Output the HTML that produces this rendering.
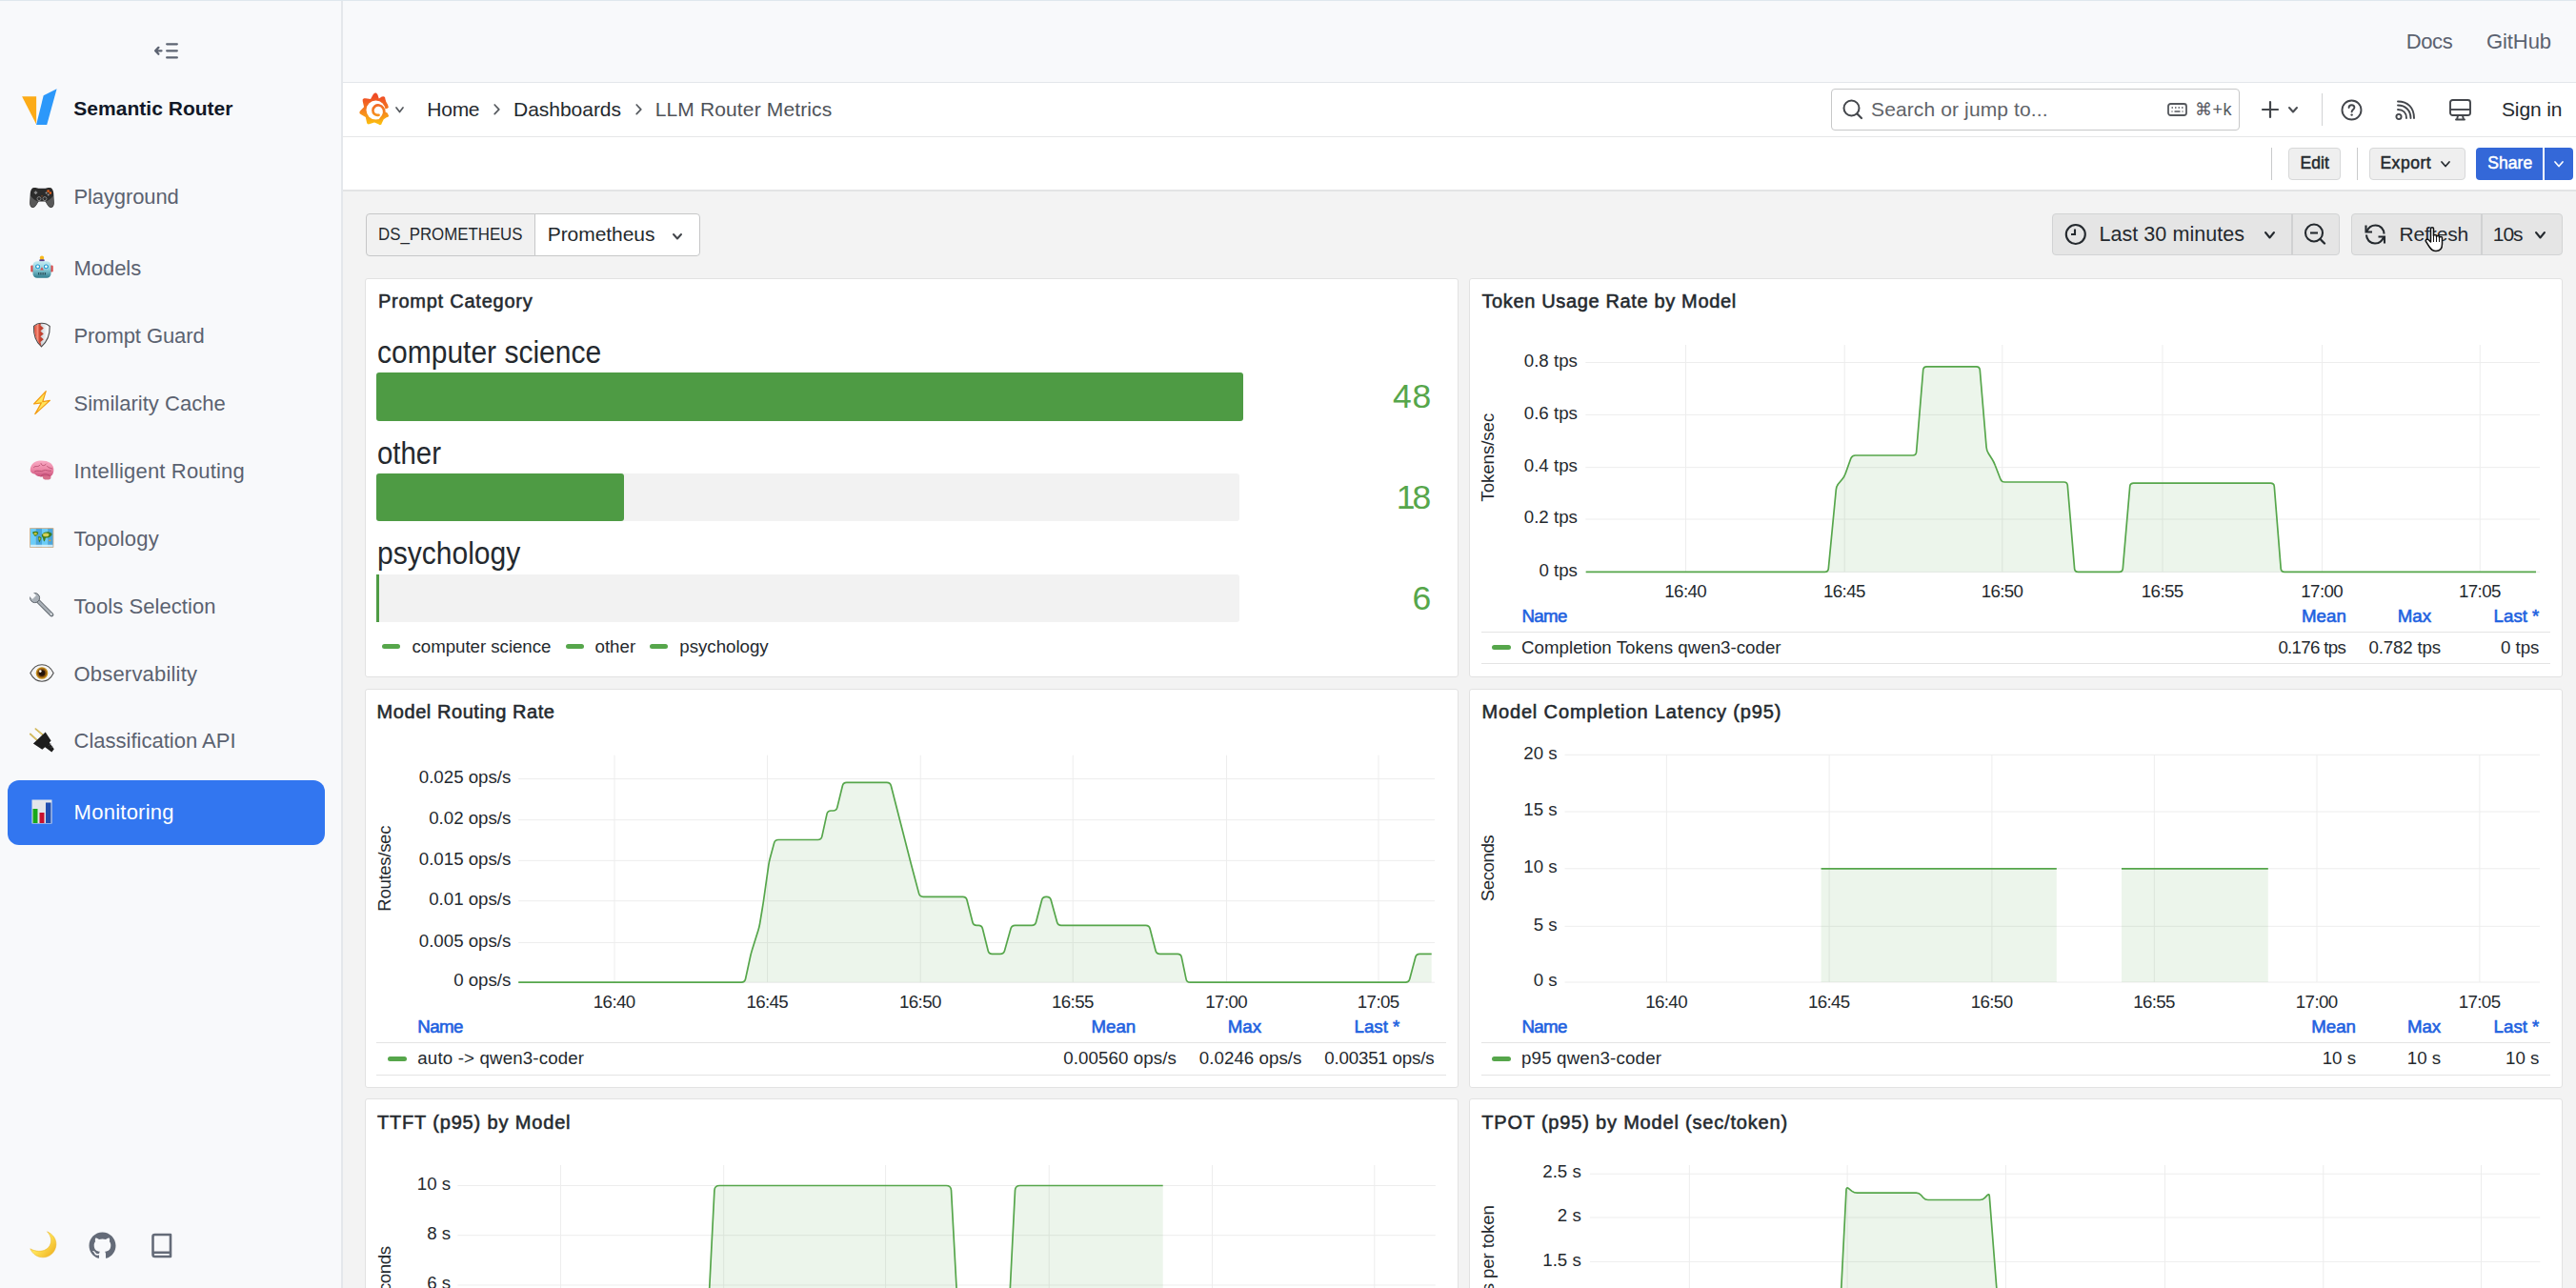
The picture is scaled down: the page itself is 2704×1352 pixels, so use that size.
<!DOCTYPE html><html><head><meta charset="utf-8"><style>
html,body{margin:0;padding:0;width:2704px;height:1352px;overflow:hidden;background:#f3f3f3;font-family:"Liberation Sans",sans-serif;}
.t{position:absolute;white-space:nowrap;line-height:0;}
</style></head><body>
<div style="position:absolute;left:0px;top:0px;width:358px;height:1352px;background:#f8f9fb"></div>
<div style="position:absolute;left:358px;top:0px;width:2px;height:1352px;background:#e4e7eb"></div>
<div style="position:absolute;left:360px;top:0px;width:2344px;height:86px;background:#f8f9fb"></div>
<div style="position:absolute;left:360px;top:86px;width:2344px;height:1px;background:#e3e6ea"></div>
<div style="position:absolute;left:0px;top:0px;width:2704px;height:1.4px;background:#dfe7ee"></div>
<svg style="position:absolute;left:160px;top:42px;overflow:visible;" width="30" height="22" viewBox="0 0 30 22"><g stroke="#5d6472" stroke-width="2.3" fill="none" stroke-linecap="round" stroke-linejoin="round"><path d="M15.2 4.3 H25.8"/><path d="M15.2 11.3 H25.8"/><path d="M15.2 18.4 H25.8"/><path d="M6.4 7.9 L3.1 11.3 L6.4 14.7 M3.3 11.3 H9.5"/></g></svg>
<svg style="position:absolute;left:22px;top:93px;overflow:visible;" width="38" height="39" viewBox="0 0 38 39"><path d="M1.1 8.2 H16.1 V37.6 Z" fill="#fcab17"/><path d="M23.7 7.2 L37.6 0.3 L27.2 37.9 H16.1 Z" fill="#2c98fa"/></svg>
<div class="t" style="left:77.30px;top:113.85px;font-size:21px;color:#111827;font-weight:700;letter-spacing:0.022px;">Semantic Router</div>
<div class="t" style="left:77.50px;top:206.50px;font-size:22px;color:#5b6270;font-weight:400;letter-spacing:-0.111px;">Playground</div>
<div class="t" style="left:77.50px;top:282.20px;font-size:22px;color:#5b6270;font-weight:400;letter-spacing:-0.054px;">Models</div>
<div class="t" style="left:77.50px;top:353.10px;font-size:22px;color:#5b6270;font-weight:400;letter-spacing:-0.089px;">Prompt Guard</div>
<div class="t" style="left:77.50px;top:424.10px;font-size:22px;color:#5b6270;font-weight:400;letter-spacing:0.016px;">Similarity Cache</div>
<div class="t" style="left:77.50px;top:494.80px;font-size:22px;color:#5b6270;font-weight:400;letter-spacing:0.172px;">Intelligent Routing</div>
<div class="t" style="left:77.50px;top:565.50px;font-size:22px;color:#5b6270;font-weight:400;letter-spacing:0.153px;">Topology</div>
<div class="t" style="left:77.50px;top:636.50px;font-size:22px;color:#5b6270;font-weight:400;letter-spacing:0.074px;">Tools Selection</div>
<div class="t" style="left:77.50px;top:707.60px;font-size:22px;color:#5b6270;font-weight:400;letter-spacing:0.196px;">Observability</div>
<div class="t" style="left:77.50px;top:778.30px;font-size:22px;color:#5b6270;font-weight:400;letter-spacing:0.007px;">Classification API</div>
<div style="position:absolute;left:8px;top:819px;width:333px;height:68px;background:#3276f0;border-radius:12px"></div>
<div class="t" style="left:77.60px;top:853.30px;font-size:22px;color:#ffffff;font-weight:400;letter-spacing:0.248px;">Monitoring</div>
<svg style="position:absolute;left:31px;top:196px;overflow:visible;" width="26" height="23" viewBox="0 0 26 23"><path d="M5 1 C2.5 1 1.2 3 0.8 6.5 L0.2 16.5 C0 19.8 1.5 22 3.5 22 C5.3 22 6.3 20.8 7.5 18.8 L9.5 15.5 H16.5 L18.5 18.8 C19.7 20.8 20.7 22 22.5 22 C24.5 22 26 19.8 25.8 16.5 L25.2 6.5 C24.8 3 23.5 1 21 1 C19 1 18 1.6 16.5 1.8 H9.5 C8 1.6 7 1 5 1 Z" fill="#2b2b2b"/><path d="M1.2 9.5 L0.6 16.5 C0.4 19.4 1.8 21.4 3.5 21.4 C5 21.4 6 20.3 7.2 18.5 L9.2 15.6 C6.5 15 3.5 12.8 1.2 9.5 Z" fill="#585858"/><path d="M24.8 9.5 L25.4 16.5 C25.6 19.4 24.2 21.4 22.5 21.4 C21 21.4 20 20.3 18.8 18.5 L16.8 15.6 C19.5 15 22.5 12.8 24.8 9.5 Z" fill="#585858"/><path d="M6.5 4.6 V8 M4.8 6.3 H8.2" stroke="#8a8a8a" stroke-width="1.4"/><circle cx="19.6" cy="4.6" r="1.3" fill="#e4621e"/><circle cx="21.8" cy="6.6" r="1.3" fill="#e4621e"/><circle cx="17.6" cy="6.5" r="1" fill="#9a9a9a"/><circle cx="19.7" cy="8.6" r="1" fill="#9a9a9a"/><circle cx="10" cy="12.6" r="2" fill="#2b2b2b" stroke="#8c8c8c" stroke-width="0.9"/><circle cx="16" cy="12.6" r="2" fill="#2b2b2b" stroke="#8c8c8c" stroke-width="0.9"/><circle cx="13" cy="9.8" r="0.6" fill="#c0601f"/></svg>
<svg style="position:absolute;left:32px;top:268px;overflow:visible;" width="24" height="24" viewBox="0 0 24 24"><defs><linearGradient id="rb" x1="0" y1="0" x2="0" y2="1"><stop offset="0" stop-color="#c5ecf2"/><stop offset="0.45" stop-color="#8fd0dc"/><stop offset="1" stop-color="#2f7d8e"/></linearGradient></defs><circle cx="12" cy="2.8" r="2.2" fill="#f6b81c"/><rect x="9.3" y="4.2" width="5.4" height="2.3" rx="0.8" fill="#5b3f8f"/><rect x="0.3" y="10.5" width="3.2" height="7" rx="1.2" fill="#d94b4b"/><rect x="20.5" y="10.5" width="3.2" height="7" rx="1.2" fill="#d94b4b"/><rect x="2.5" y="6.2" width="19" height="17.5" rx="4.5" fill="url(#rb)"/><circle cx="7.6" cy="11.8" r="2.8" fill="#ffffff"/><circle cx="7.6" cy="11.8" r="2.0" fill="#ffffff" stroke="#2a9fd0" stroke-width="1.3"/><circle cx="16.4" cy="11.8" r="2.8" fill="#ffffff"/><circle cx="16.4" cy="11.8" r="2.0" fill="#ffffff" stroke="#2a9fd0" stroke-width="1.3"/><path d="M12 12.3 L10.2 15.6 H13.8 Z" fill="#d94b4b"/><rect x="8" y="18" width="8" height="2.4" rx="0.5" fill="#1e4f5c"/><path d="M9.8 18 V20.4 M12 18 V20.4 M14.2 18 V20.4" stroke="#9ed7e0" stroke-width="0.7"/></svg>
<svg style="position:absolute;left:34px;top:338px;overflow:visible;" width="20" height="27" viewBox="0 0 20 27"><defs><linearGradient id="shr" x1="0" y1="0" x2="1" y2="0"><stop offset="0.15" stop-color="#e4604c"/><stop offset="0.35" stop-color="#f7907c"/><stop offset="0.55" stop-color="#d04c38"/><stop offset="0.7" stop-color="#c0402f"/></linearGradient><linearGradient id="shw" x1="0" y1="0" x2="1" y2="0"><stop offset="0.4" stop-color="#c9ccd0"/><stop offset="0.8" stop-color="#f6f7f8"/></linearGradient></defs><path d="M1.5 4.5 C4 2 7 1.2 9.8 1.2 C12.6 1.2 15.6 2 18.2 4.5 C18.5 13 15.5 20.5 9.5 25.9 C3.5 20.5 1 13 1.5 4.5 Z" fill="url(#shw)" stroke="#4a4a4a" stroke-width="1.1"/><path d="M2.1 4.8 C4.4 2.6 7 1.8 9 1.8 L8.4 3.5 L11.8 6.6 L8.4 9.5 L11.8 12.4 L8.4 15.3 L11.8 18.3 L8.4 21 L9.5 25 C4 20 1.6 13 2.1 4.8 Z" fill="url(#shr)"/></svg>
<svg style="position:absolute;left:35px;top:410px;overflow:visible;" width="18" height="25" viewBox="0 0 18 25"><path d="M13.2 0.6 L0.6 14 L8.4 12.9 L1.8 24.6 L17.4 10.4 L9.8 11.6 Z" fill="#ffe55c" stroke="#f39c12" stroke-width="1.2" stroke-linejoin="round"/></svg>
<svg style="position:absolute;left:31px;top:483px;overflow:visible;" width="26" height="21" viewBox="0 0 26 21"><defs><linearGradient id="brg" x1="0" y1="0" x2="0" y2="1"><stop offset="0" stop-color="#f8aac4"/><stop offset="0.55" stop-color="#ec86a6"/><stop offset="1" stop-color="#c9507a"/></linearGradient></defs><ellipse cx="18.2" cy="18" rx="4.3" ry="2.6" fill="#d76f8b"/><path d="M0.8 11 C0.5 6 4 1.8 9 0.8 C13 0 18.5 0.5 22 3 C24.5 5 25.8 8 25.3 11.5 C25 14.5 23.5 16.5 21.5 17.2 C19 16.3 16 16.2 13.5 17.4 C12.5 17.8 11.8 17.6 11.2 17.2 C8.8 17.2 6.8 16.3 5.3 14.6 C3.3 14.3 1.2 13.3 0.8 11 Z" fill="url(#brg)"/><path d="M4.5 7.5 C6.5 5 8.8 8.2 10.8 5.2 M12 3.5 C13.2 6.8 15.8 6 17.5 4 M18.5 6.3 C20 8.8 22 7.8 23.8 9 M5.5 11.8 C8.8 10 12 12.8 15 10.8 C17 9.6 19.5 11.8 22.5 11.2 M12 16.6 C14 14.3 17.5 14 21 16.2" stroke="#a83c60" stroke-width="0.9" stroke-opacity="0.75" fill="none" stroke-linecap="round"/></svg>
<svg style="position:absolute;left:31px;top:554px;overflow:visible;" width="26" height="21" viewBox="0 0 26 21"><rect x="0" y="0" width="25.4" height="21" rx="0.8" fill="#d8b48c"/><rect x="0.9" y="0.9" width="5.9" height="19.2" fill="#6ccdf8"/><rect x="6.8" y="0.9" width="6.2" height="19.2" fill="#4aa6dd"/><rect x="13" y="0.9" width="6.2" height="19.2" fill="#6ccdf8"/><rect x="19.2" y="0.9" width="5.3" height="19.2" fill="#4aa6dd"/><path d="M0.9 17.8 H24.5 V20.1 H0.9 Z" fill="#dff3fb" fill-opacity="0.85"/><path d="M3 4.8 C4.5 3.6 7 3.4 9 4.4 C9.6 5.6 8.8 7 7.5 7.8 C6.8 8.6 6.3 9.2 5.6 8.7 C4.8 7.8 3.6 6.5 3 4.8 Z" fill="#3f7d22"/><ellipse cx="6.2" cy="6.3" rx="1.6" ry="1.2" fill="#c8c23a"/><path d="M9.2 9.3 C10.6 9 12 9.6 12.4 10.8 C12.2 12.6 11 14.2 10.3 15.6 C9.6 14 9.2 11.8 9.2 9.3 Z" fill="#3f7d22"/><ellipse cx="10.6" cy="11.5" rx="0.9" ry="1.3" fill="#b8b83a"/><path d="M12.8 7.6 C14 5.2 17 4 20.5 4.4 C22.5 4.8 23.8 5.8 23.5 7.2 C22.8 8.6 21.5 9.6 20 10.2 C18.5 10.4 17.2 10.6 16.6 11.2 C16.8 12.4 16 13.8 15.3 14.6 C14.6 13.6 14.3 12 14 10.8 C13.3 10 12.8 8.8 12.8 7.6 Z" fill="#3f7d22"/><ellipse cx="17.2" cy="7.4" rx="3.2" ry="1.8" fill="#d4d058"/><ellipse cx="21.4" cy="13.3" rx="1.1" ry="0.9" fill="#d9a436"/></svg>
<svg style="position:absolute;left:31px;top:622px;overflow:visible;" width="26" height="26" viewBox="0 0 26 26"><path d="M6.5 6.5 L23.2 23.2" stroke="#5f666d" stroke-width="4.4" stroke-linecap="round"/><path d="M6.5 6.5 L23.2 23.2" stroke="#a9b0b7" stroke-width="2.6" stroke-linecap="round"/><circle cx="5.6" cy="5.6" r="5" fill="#a9b0b7" stroke="#5f666d" stroke-width="1"/><path d="M-0.5 3.5 L3.5 -0.5 L7 3 L3 7 Z" fill="#f8f9fb"/><circle cx="22.6" cy="22.6" r="0.9" fill="#f8f9fb"/></svg>
<svg style="position:absolute;left:31px;top:697px;overflow:visible;" width="26" height="19" viewBox="0 0 26 19"><path d="M0.8 9.5 C4 3 8.5 0.8 13 0.8 C17.5 0.8 22 3 25.2 9.5 C22 16 17.5 18.2 13 18.2 C8.5 18.2 4 16 0.8 9.5 Z" fill="#f4f4f4" stroke="#4d4d4d" stroke-width="1.1"/><circle cx="13" cy="9.5" r="6.3" fill="#c7901c"/><circle cx="13" cy="9.5" r="5" fill="#8a5412"/><circle cx="13" cy="9.5" r="3.3" fill="#24140a"/><circle cx="11.3" cy="7.6" r="1.3" fill="#ffffff"/></svg>
<svg style="position:absolute;left:31px;top:764px;overflow:visible;" width="27" height="27" viewBox="0 0 27 27"><path d="M6.4 1.1 L13.6 7.2 M0.8 6.5 L7.8 12.9" stroke="#c9ad45" stroke-width="1.7" stroke-linecap="round"/><path d="M6.6 1.3 L13 6.8 M1 6.7 L7.3 12.5" stroke="#efe1a0" stroke-width="0.5" stroke-linecap="round"/><path d="M3.9 16.5 L16.7 4.4 L22.6 13.4 L20.8 15.5 L25.8 22.3 L23.3 25.6 L16.2 20.3 L13.3 22.7 Z" fill="#1d1d1d"/><path d="M20.5 18.5 L22.5 16.8 M22.3 21 L24.3 19.3" stroke="#555" stroke-width="0.9"/></svg>
<svg style="position:absolute;left:33px;top:839px;overflow:visible;" width="22" height="26" viewBox="0 0 22 26"><rect x="0.5" y="0.5" width="21" height="25" fill="#e3e6ea"/><rect x="1.5" y="10" width="5" height="15" fill="#19a81b"/><rect x="8.5" y="14" width="5" height="11" fill="#c8102e"/><rect x="15" y="3.5" width="5.5" height="21.5" fill="#1f4fb0"/></svg>
<svg style="position:absolute;left:31px;top:1291px;overflow:visible;" width="30" height="30" viewBox="0 0 30 30"><defs><linearGradient id="mn" x1="0.2" y1="0.3" x2="0.9" y2="0.9"><stop offset="0.3" stop-color="#ffe55a"/><stop offset="1" stop-color="#f0b424"/></linearGradient></defs><path d="M18.5 1.8 C24.5 4.5 28.2 9.5 27.9 15.5 C27.5 23 21.5 28.8 14.2 28.8 C8.5 28.8 3.2 25.5 0.8 19.8 C5 22.3 10.5 23 15.2 21.5 C20.5 19.5 23.2 14.5 22.5 9.5 C22 6.5 20.5 3.8 18.5 1.8 Z" fill="url(#mn)" stroke="#e8b020" stroke-width="0.5"/></svg>
<svg style="position:absolute;left:93px;top:1293px;overflow:visible;" width="29" height="29" viewBox="0 0 29 29"><path fill="#646b78" d="M14.5 0.5 C6.8 0.5 0.5 6.8 0.5 14.5 C0.5 20.7 4.5 25.9 10.1 27.8 C10.8 27.9 11 27.5 11 27.2 V24.6 C7.1 25.4 6.3 23 6.3 23 C5.7 21.4 4.8 20.9 4.8 20.9 C3.5 20.1 4.9 20.1 4.9 20.1 C6.3 20.2 7 21.5 7 21.5 C8.3 23.6 10.3 23 11.1 22.7 C11.2 21.8 11.6 21.2 12 20.8 C8.9 20.5 5.7 19.3 5.7 14 C5.7 12.5 6.2 11.2 7.1 10.2 C7 9.9 6.5 8.5 7.3 6.6 C7.3 6.6 8.4 6.2 11 8 C12.1 7.7 13.3 7.5 14.5 7.5 C15.7 7.5 16.9 7.7 18 8 C20.6 6.2 21.7 6.6 21.7 6.6 C22.5 8.5 22 9.9 21.9 10.2 C22.8 11.2 23.3 12.5 23.3 14 C23.3 19.3 20.1 20.5 17 20.8 C17.5 21.3 18 22.2 18 23.4 V27.2 C18 27.5 18.2 27.9 18.9 27.8 C24.5 25.9 28.5 20.7 28.5 14.5 C28.5 6.8 22.2 0.5 14.5 0.5 Z"/></svg>
<svg style="position:absolute;left:158px;top:1294px;overflow:visible;" width="24" height="28" viewBox="0 0 24 28"><path d="M2.5 22 V4 C2.5 2.8 3.3 2 4.5 2 H21 V25 H4.5 C3.3 25 2.5 24 2.5 22.8 C2.5 21.6 3.3 20.8 4.5 20.8 H21" fill="none" stroke="#646b78" stroke-width="2.6" stroke-linejoin="round"/></svg>
<div class="t" style="left:2525.70px;top:44.30px;font-size:22px;color:#5b6270;font-weight:400;letter-spacing:-0.356px;">Docs</div>
<div class="t" style="left:2610.00px;top:44.30px;font-size:22px;color:#5b6270;font-weight:400;letter-spacing:-0.081px;">GitHub</div>
<div style="position:absolute;left:360px;top:87px;width:2344px;height:56px;background:#ffffff"></div>
<div style="position:absolute;left:360px;top:143px;width:2344px;height:1px;background:#e6e7e8"></div>
<div style="position:absolute;left:360px;top:144px;width:2344px;height:55px;background:#ffffff"></div>
<div style="position:absolute;left:360px;top:199px;width:2344px;height:1.5px;background:#e3e4e5"></div>
<svg style="position:absolute;left:370px;top:92px;overflow:visible;" width="60" height="48" viewBox="0 0 60 48"><defs><linearGradient id="gg" x1="0" y1="0" x2="0" y2="1"><stop offset="0.1" stop-color="#ef4b25"/><stop offset="0.5" stop-color="#f47a20"/><stop offset="1" stop-color="#fcc30e"/></linearGradient><linearGradient id="gg2" gradientUnits="userSpaceOnUse" x1="0" y1="14" x2="0" y2="34"><stop offset="0" stop-color="#f05a28"/><stop offset="1" stop-color="#f7a21a"/></linearGradient></defs><path fill="url(#gg)" d="M10.78 14.54 L10.66 12.56 L11.94 11.20 L13.92 11.18 L19.01 12.12 L21.64 7.21 L23.02 5.64 L24.94 5.61 L26.37 7.13 L27.77 11.47 L30.73 9.57 L32.54 9.13 L34.05 10.07 L34.46 11.90 L35.25 14.81 L37.08 18.04 L37.84 20.87 L36.71 21.81 L34.18 22.44 L34.18 25.56 L36.53 26.60 L37.33 27.89 L38.06 29.45 L37.42 30.86 L35.76 31.33 L32.76 33.33 L30.93 37.01 L30.22 38.65 L28.66 39.19 L27.09 38.33 L22.98 36.53 L18.40 37.90 L16.65 38.39 L15.19 37.51 L14.80 35.73 L13.79 30.95 L9.11 28.36 L7.61 27.24 L7.36 25.48 L8.50 24.00 L12.09 20.15 Z"/><circle cx="24.5" cy="23.6" r="10" fill="#ffffff"/><path d="M27.6 28.7 C24 29.6 21.3 27.2 21.4 23.8 C21.6 20.2 24.6 18 28 18.5 C31.7 19.2 33.8 23 33.1 26.8 C32.6 29.5 31 31.5 29.5 32.8" fill="none" stroke="url(#gg2)" stroke-width="2.6" stroke-linecap="round"/></svg>
<svg style="position:absolute;left:415px;top:112px;overflow:visible;" width="9" height="6" viewBox="0 0 9 6"><path d="M1 1 L4.5 5.5 L8 1" fill="none" stroke="#55595e" stroke-width="1.7" stroke-linecap="round" stroke-linejoin="round"/></svg>
<div class="t" style="left:448.30px;top:114.85px;font-size:21px;color:#24292e;font-weight:400;letter-spacing:-0.258px;">Home</div>
<svg style="position:absolute;left:518px;top:109px;overflow:visible;" width="7" height="12" viewBox="0 0 7 12"><path d="M1.2 1 L5.8 5.8 L1.2 10.6" fill="none" stroke="#55595e" stroke-width="1.7" stroke-linecap="round" stroke-linejoin="round"/></svg>
<div class="t" style="left:539.00px;top:114.85px;font-size:21px;color:#24292e;font-weight:400;letter-spacing:-0.023px;">Dashboards</div>
<svg style="position:absolute;left:667px;top:109px;overflow:visible;" width="7" height="12" viewBox="0 0 7 12"><path d="M1.2 1 L5.8 5.8 L1.2 10.6" fill="none" stroke="#55595e" stroke-width="1.7" stroke-linecap="round" stroke-linejoin="round"/></svg>
<div class="t" style="left:687.70px;top:114.85px;font-size:21px;color:#4f5359;font-weight:400;letter-spacing:0.138px;">LLM Router Metrics</div>
<div style="position:absolute;left:1922px;top:93px;width:429px;height:44px;box-sizing:border-box;border:1.5px solid #c7c8c9;border-radius:4px;background:#fff"></div>
<svg style="position:absolute;left:1933px;top:104px;overflow:visible;" width="24" height="22" viewBox="0 0 24 22"><circle cx="10.5" cy="9.5" r="8" fill="none" stroke="#43464b" stroke-width="2"/><path d="M16.5 15.5 L21 20" stroke="#43464b" stroke-width="2.2" stroke-linecap="round"/></svg>
<div class="t" style="left:1964.00px;top:114.65px;font-size:21px;color:#5f6368;font-weight:400;letter-spacing:0.122px;">Search or jump to...</div>
<svg style="position:absolute;left:2275px;top:108px;overflow:visible;" width="21" height="14" viewBox="0 0 21 14"><rect x="1" y="1" width="19" height="12" rx="2.5" fill="none" stroke="#55585d" stroke-width="1.8"/><path d="M4.5 5 h1.5 M8 5 h1.5 M11.5 5 h1.5 M15 5 h1.5 M4.5 9 h1 M7.5 9 h6 M15.5 9 h1" stroke="#55585d" stroke-width="1.6"/></svg>
<div class="t" style="left:2304.00px;top:114.50px;font-size:18px;color:#55585d;font-weight:400;letter-spacing:0.500px;">&#8984;+k</div>
<svg style="position:absolute;left:2374px;top:106px;overflow:visible;" width="18" height="18" viewBox="0 0 18 18"><path d="M9 1 V17 M1 9 H17" stroke="#43464b" stroke-width="2.2" stroke-linecap="round"/></svg>
<svg style="position:absolute;left:2402px;top:112px;overflow:visible;" width="10" height="6" viewBox="0 0 10 6"><path d="M1 1 L5.0 5.5 L9 1" fill="none" stroke="#4a4d52" stroke-width="2" stroke-linecap="round" stroke-linejoin="round"/></svg>
<div style="position:absolute;left:2437px;top:98px;width:1.2px;height:34px;background:#d2d3d4"></div>
<svg style="position:absolute;left:2457px;top:104px;overflow:visible;" width="23" height="23" viewBox="0 0 23 23"><circle cx="11.5" cy="11.5" r="10" fill="none" stroke="#43464b" stroke-width="1.9"/><path d="M8.6 9 C8.6 7.2 9.9 6.2 11.5 6.2 C13.2 6.2 14.4 7.3 14.4 8.8 C14.4 10.9 11.6 11 11.6 13.4" fill="none" stroke="#43464b" stroke-width="1.9" stroke-linecap="round"/><circle cx="11.6" cy="16.6" r="1.2" fill="#43464b"/></svg>
<svg style="position:absolute;left:2514px;top:106px;overflow:visible;" width="21" height="21" viewBox="0 0 21 21"><circle cx="4" cy="16.5" r="2.6" fill="none" stroke="#43464b" stroke-width="1.9"/><path d="M3 9 C8.5 9 12 12.5 12 18 M3 4.5 C11 4.5 16.5 10 16.5 18 M3 0.5 C13.5 0.5 20 7 20 18" fill="none" stroke="#43464b" stroke-width="1.9" stroke-linecap="round"/></svg>
<svg style="position:absolute;left:2571px;top:104px;overflow:visible;" width="23" height="23" viewBox="0 0 23 23"><rect x="1" y="1" width="21" height="16" rx="2.5" fill="none" stroke="#43464b" stroke-width="1.9"/><path d="M1 11 H22" stroke="#43464b" stroke-width="1.9"/><path d="M7 21.5 H16 M9 17.5 L8 21.5 M14 17.5 L15 21.5" stroke="#43464b" stroke-width="1.9" stroke-linecap="round"/></svg>
<div class="t" style="left:2626.00px;top:114.65px;font-size:21px;color:#24292e;font-weight:400;letter-spacing:-0.146px;">Sign in</div>
<div style="position:absolute;left:2384.3px;top:155px;width:1.1px;height:34px;background:#c9cacb"></div>
<div style="position:absolute;left:2402px;top:155px;width:55px;height:34px;box-sizing:border-box;background:#efefef;border:1px solid #d7d8d9;border-radius:4px"></div>
<div class="t" style="left:2414.50px;top:171.47px;font-size:17.5px;color:#24292e;font-weight:400;letter-spacing:0.061px;-webkit-text-stroke:0.5px #24292e;">Edit</div>
<div style="position:absolute;left:2474.2px;top:155px;width:1.1px;height:34px;background:#c9cacb"></div>
<div style="position:absolute;left:2487px;top:155px;width:101px;height:34px;box-sizing:border-box;background:#efefef;border:1px solid #d7d8d9;border-radius:4px"></div>
<div class="t" style="left:2498.40px;top:171.47px;font-size:17.5px;color:#24292e;font-weight:400;letter-spacing:0.537px;-webkit-text-stroke:0.5px #24292e;">Export</div>
<svg style="position:absolute;left:2562px;top:169px;overflow:visible;" width="10" height="6" viewBox="0 0 10 6"><path d="M1 1 L5.0 5.5 L9 1" fill="none" stroke="#24292e" stroke-width="1.7" stroke-linecap="round" stroke-linejoin="round"/></svg>
<div style="position:absolute;left:2599px;top:155px;width:102px;height:34px;background:#3468d8;border-radius:4px"></div>
<div style="position:absolute;left:2669px;top:155px;width:1.5px;height:34px;background:#ffffff"></div>
<div class="t" style="left:2611.20px;top:171.47px;font-size:17.5px;color:#ffffff;font-weight:400;letter-spacing:0.059px;-webkit-text-stroke:0.5px #ffffff;">Share</div>
<svg style="position:absolute;left:2681px;top:169px;overflow:visible;" width="10" height="6" viewBox="0 0 10 6"><path d="M1 1 L5.0 5.5 L9 1" fill="none" stroke="#ffffff" stroke-width="1.7" stroke-linecap="round" stroke-linejoin="round"/></svg>
<div style="position:absolute;left:384px;top:224px;width:178px;height:45px;box-sizing:border-box;background:#f1f1f1;border:1.5px solid #c6c7c8;border-radius:4px 0 0 4px"></div>
<div class="t" style="left:397.30px;top:245.83px;font-size:18.5px;color:#24292e;font-weight:400;transform:scaleX(0.9097);transform-origin:0 0;">DS_PROMETHEUS</div>
<div style="position:absolute;left:561px;top:224px;width:174px;height:45px;box-sizing:border-box;background:#ffffff;border:1.5px solid #c6c7c8;border-radius:0 4px 4px 0"></div>
<div class="t" style="left:574.70px;top:245.75px;font-size:21px;color:#24292e;font-weight:400;letter-spacing:-0.053px;">Prometheus</div>
<svg style="position:absolute;left:706px;top:245px;overflow:visible;" width="10" height="6" viewBox="0 0 10 6"><path d="M1 1 L5.0 5.5 L9 1" fill="none" stroke="#43464b" stroke-width="2" stroke-linecap="round" stroke-linejoin="round"/></svg>
<div style="position:absolute;left:2154px;top:224px;width:302px;height:44px;box-sizing:border-box;background:#e5e5e5;border:1.5px solid #d2d3d4;border-radius:4px"></div>
<div style="position:absolute;left:2405px;top:225px;width:1.5px;height:42px;background:#d0d1d2"></div>
<svg style="position:absolute;left:2167px;top:234px;overflow:visible;" width="24" height="24" viewBox="0 0 24 24"><circle cx="11.8" cy="12" r="10" fill="none" stroke="#24292e" stroke-width="2.1"/><path d="M11 6.5 V12 H7" fill="none" stroke="#24292e" stroke-width="2.1"/></svg>
<div class="t" style="left:2203.40px;top:245.67px;font-size:21.5px;color:#24292e;font-weight:400;letter-spacing:0.068px;">Last 30 minutes</div>
<svg style="position:absolute;left:2377px;top:243px;overflow:visible;" width="11" height="7" viewBox="0 0 11 7"><path d="M1 1 L5.5 6.5 L10 1" fill="none" stroke="#24292e" stroke-width="2" stroke-linecap="round" stroke-linejoin="round"/></svg>
<svg style="position:absolute;left:2419px;top:234px;overflow:visible;" width="24" height="24" viewBox="0 0 24 24"><circle cx="10" cy="10.5" r="9" fill="none" stroke="#24292e" stroke-width="2.1"/><path d="M6 10.5 H14" stroke="#24292e" stroke-width="2.1"/><path d="M16.5 17 L21 21.5" stroke="#24292e" stroke-width="2.3" stroke-linecap="round"/></svg>
<div style="position:absolute;left:2468px;top:224px;width:222px;height:44px;box-sizing:border-box;background:#e5e5e5;border:1.5px solid #d2d3d4;border-radius:4px"></div>
<div style="position:absolute;left:2604px;top:225px;width:1.5px;height:42px;background:#d0d1d2"></div>
<svg style="position:absolute;left:2481px;top:234px;overflow:visible;" width="24" height="24" viewBox="0 0 24 24"><path d="M3.5 9 C5 5 8.5 2.5 12.5 2.5 C18 2.5 21.5 7 21.5 11.5" fill="none" stroke="#24292e" stroke-width="2.1"/><path d="M21 15 C19.5 19 16 21.5 12 21.5 C6.5 21.5 3 17 3 12.5" fill="none" stroke="#24292e" stroke-width="2.1"/><path d="M2.5 2.5 V9.5 H9" fill="none" stroke="#24292e" stroke-width="2.1"/><path d="M22 21.5 V14.5 H15.5" fill="none" stroke="#24292e" stroke-width="2.1"/></svg>
<div class="t" style="left:2518.40px;top:245.55px;font-size:21px;color:#24292e;font-weight:400;letter-spacing:-0.104px;">Refresh</div>
<div class="t" style="left:2616.80px;top:245.55px;font-size:21px;color:#24292e;font-weight:400;letter-spacing:-1.053px;">10s</div>
<svg style="position:absolute;left:2661px;top:243px;overflow:visible;" width="11" height="7" viewBox="0 0 11 7"><path d="M1 1 L5.5 6.5 L10 1" fill="none" stroke="#24292e" stroke-width="2" stroke-linecap="round" stroke-linejoin="round"/></svg>
<div style="position:absolute;left:383px;top:291.7px;width:1148.4px;height:419.3px;box-sizing:border-box;background:#ffffff;border:1.4px solid #e2e2e2;border-radius:3px"></div>
<div style="position:absolute;left:1542px;top:291.7px;width:1147.5px;height:419.3px;box-sizing:border-box;background:#ffffff;border:1.4px solid #e2e2e2;border-radius:3px"></div>
<div style="position:absolute;left:383px;top:722.5px;width:1148.4px;height:419.5px;box-sizing:border-box;background:#ffffff;border:1.4px solid #e2e2e2;border-radius:3px"></div>
<div style="position:absolute;left:1542px;top:722.5px;width:1147.5px;height:419.5px;box-sizing:border-box;background:#ffffff;border:1.4px solid #e2e2e2;border-radius:3px"></div>
<div style="position:absolute;left:383px;top:1153.3px;width:1148.4px;height:260px;box-sizing:border-box;background:#ffffff;border:1.4px solid #e2e2e2;border-radius:3px"></div>
<div style="position:absolute;left:1542px;top:1153.3px;width:1147.5px;height:260px;box-sizing:border-box;background:#ffffff;border:1.4px solid #e2e2e2;border-radius:3px"></div>
<div class="t" style="left:396.90px;top:315.80px;font-size:20px;color:#24292e;font-weight:400;letter-spacing:0.762px;-webkit-text-stroke:0.55px #24292e;">Prompt Category</div>
<div class="t" style="left:1555.40px;top:315.80px;font-size:20px;color:#24292e;font-weight:400;letter-spacing:0.646px;-webkit-text-stroke:0.55px #24292e;">Token Usage Rate by Model</div>
<div class="t" style="left:395.60px;top:746.70px;font-size:20px;color:#24292e;font-weight:400;letter-spacing:0.562px;-webkit-text-stroke:0.55px #24292e;">Model Routing Rate</div>
<div class="t" style="left:1555.40px;top:746.70px;font-size:20px;color:#24292e;font-weight:400;letter-spacing:0.862px;-webkit-text-stroke:0.55px #24292e;">Model Completion Latency (p95)</div>
<div class="t" style="left:395.90px;top:1178.40px;font-size:20px;color:#24292e;font-weight:400;letter-spacing:0.844px;-webkit-text-stroke:0.55px #24292e;">TTFT (p95) by Model</div>
<div class="t" style="left:1555.30px;top:1178.40px;font-size:20px;color:#24292e;font-weight:400;letter-spacing:0.813px;-webkit-text-stroke:0.55px #24292e;">TPOT (p95) by Model (sec/token)</div>
<div class="t" style="left:396.30px;top:370.23px;font-size:32.5px;color:#24292e;font-weight:400;transform:scaleX(0.9234);transform-origin:0 0;">computer science</div>
<div style="position:absolute;left:395.1px;top:390.8px;width:909.9px;height:51px;background:#4e9b44;border-radius:3px"></div>
<div class="t" style="left:1503.05px;top:416.18px;font-size:35.5px;color:#56a64b;font-weight:400;letter-spacing:0.750px;transform:translateX(-100%);">48</div>
<div class="t" style="left:396.30px;top:476.02px;font-size:32.5px;color:#24292e;font-weight:400;transform:scaleX(0.9045);transform-origin:0 0;">other</div>
<div style="position:absolute;left:395.1px;top:497.2px;width:905.7px;height:49.9px;background:#f2f2f2;border-radius:3px"></div>
<div style="position:absolute;left:395.1px;top:497.2px;width:260.2px;height:49.9px;background:#4e9b44;border-radius:3px"></div>
<div class="t" style="left:1499.30px;top:521.98px;font-size:35.5px;color:#56a64b;font-weight:400;letter-spacing:-3.000px;transform:translateX(-100%);">18</div>
<div class="t" style="left:396.30px;top:581.23px;font-size:32.5px;color:#24292e;font-weight:400;transform:scaleX(0.9243);transform-origin:0 0;">psychology</div>
<div style="position:absolute;left:395.1px;top:603px;width:905.7px;height:50px;background:#f2f2f2;border-radius:3px"></div>
<div style="position:absolute;left:395.1px;top:603px;width:2.5px;height:50px;background:#4e9b44"></div>
<div class="t" style="left:1501.05px;top:627.88px;font-size:35.5px;color:#56a64b;font-weight:400;letter-spacing:-1.250px;transform:translateX(-100%);">6</div>
<div style="position:absolute;left:400.7px;top:676.2px;width:19.5px;height:5px;background:#56a64b;border-radius:3px"></div>
<div class="t" style="left:432.50px;top:679.06px;font-size:18.7px;color:#24292e;font-weight:400;letter-spacing:-0.035px;">computer science</div>
<div style="position:absolute;left:593.8px;top:676.2px;width:19.5px;height:5px;background:#56a64b;border-radius:3px"></div>
<div class="t" style="left:624.50px;top:679.06px;font-size:18.7px;color:#24292e;font-weight:400;letter-spacing:0.018px;">other</div>
<div style="position:absolute;left:681.6px;top:676.2px;width:19.5px;height:5px;background:#56a64b;border-radius:3px"></div>
<div class="t" style="left:713.30px;top:679.06px;font-size:18.7px;color:#24292e;font-weight:400;letter-spacing:-0.020px;">psychology</div>
<div class="t" style="left:1655.90px;top:378.75px;font-size:18.7px;color:#24292e;font-weight:400;transform:translateX(-100%);">0.8 tps</div>
<div class="t" style="left:1655.90px;top:433.65px;font-size:18.7px;color:#24292e;font-weight:400;transform:translateX(-100%);">0.6 tps</div>
<div class="t" style="left:1655.90px;top:488.95px;font-size:18.7px;color:#24292e;font-weight:400;transform:translateX(-100%);">0.4 tps</div>
<div class="t" style="left:1655.90px;top:543.25px;font-size:18.7px;color:#24292e;font-weight:400;transform:translateX(-100%);">0.2 tps</div>
<div class="t" style="left:1655.90px;top:598.65px;font-size:18.7px;color:#24292e;font-weight:400;transform:translateX(-100%);">0 tps</div>
<div class="t" style="left:1769.19px;top:620.75px;font-size:18.7px;color:#24292e;font-weight:400;letter-spacing:-0.613px;transform:translateX(-50%);">16:40</div>
<div class="t" style="left:1935.89px;top:620.75px;font-size:18.7px;color:#24292e;font-weight:400;letter-spacing:-0.613px;transform:translateX(-50%);">16:45</div>
<div class="t" style="left:2101.49px;top:620.75px;font-size:18.7px;color:#24292e;font-weight:400;letter-spacing:-0.613px;transform:translateX(-50%);">16:50</div>
<div class="t" style="left:2269.69px;top:620.75px;font-size:18.7px;color:#24292e;font-weight:400;letter-spacing:-0.613px;transform:translateX(-50%);">16:55</div>
<div class="t" style="left:2437.19px;top:620.75px;font-size:18.7px;color:#24292e;font-weight:400;letter-spacing:-0.613px;transform:translateX(-50%);">17:00</div>
<div class="t" style="left:2602.89px;top:620.75px;font-size:18.7px;color:#24292e;font-weight:400;letter-spacing:-0.613px;transform:translateX(-50%);">17:05</div>
<div class="t" style="left:1597.40px;top:646.75px;font-size:18.7px;color:#1f62e0;font-weight:400;letter-spacing:-0.615px;-webkit-text-stroke:0.6px #1f62e0;">Name</div>
<div class="t" style="left:2462.80px;top:646.75px;font-size:18.7px;color:#1f62e0;font-weight:400;transform:translateX(-100%);-webkit-text-stroke:0.6px #1f62e0;">Mean</div>
<div class="t" style="left:2552.00px;top:646.75px;font-size:18.7px;color:#1f62e0;font-weight:400;transform:translateX(-100%);-webkit-text-stroke:0.6px #1f62e0;">Max</div>
<div class="t" style="left:2665.40px;top:646.75px;font-size:18.7px;color:#1f62e0;font-weight:400;transform:translateX(-100%);-webkit-text-stroke:0.6px #1f62e0;">Last *</div>
<div style="position:absolute;left:1555px;top:662.6px;width:1122px;height:1.2px;background:#e4e4e4"></div>
<div style="position:absolute;left:1566px;top:677.1px;width:19.5px;height:5px;background:#56a64b;border-radius:3px"></div>
<div class="t" style="left:1597.00px;top:679.86px;font-size:18.7px;color:#24292e;font-weight:400;letter-spacing:0.027px;">Completion Tokens qwen3-coder</div>
<div class="t" style="left:2462.11px;top:679.86px;font-size:18.7px;color:#24292e;font-weight:400;letter-spacing:-0.688px;transform:translateX(-100%);">0.176 tps</div>
<div class="t" style="left:2562.05px;top:679.86px;font-size:18.7px;color:#24292e;font-weight:400;letter-spacing:-0.155px;transform:translateX(-100%);">0.782 tps</div>
<div class="t" style="left:2665.36px;top:679.86px;font-size:18.7px;color:#24292e;font-weight:400;letter-spacing:-0.043px;transform:translateX(-100%);">0 tps</div>
<div style="position:absolute;left:1555px;top:696.1px;width:1122px;height:1.2px;background:#e4e4e4"></div>
<div class="t" style="left:536.40px;top:815.86px;font-size:18.7px;color:#24292e;font-weight:400;transform:translateX(-100%);">0.025 ops/s</div>
<div class="t" style="left:536.40px;top:858.96px;font-size:18.7px;color:#24292e;font-weight:400;transform:translateX(-100%);">0.02 ops/s</div>
<div class="t" style="left:536.40px;top:901.65px;font-size:18.7px;color:#24292e;font-weight:400;transform:translateX(-100%);">0.015 ops/s</div>
<div class="t" style="left:536.40px;top:943.96px;font-size:18.7px;color:#24292e;font-weight:400;transform:translateX(-100%);">0.01 ops/s</div>
<div class="t" style="left:536.40px;top:987.75px;font-size:18.7px;color:#24292e;font-weight:400;transform:translateX(-100%);">0.005 ops/s</div>
<div class="t" style="left:536.40px;top:1029.45px;font-size:18.7px;color:#24292e;font-weight:400;transform:translateX(-100%);">0 ops/s</div>
<div class="t" style="left:644.69px;top:1051.75px;font-size:18.7px;color:#24292e;font-weight:400;letter-spacing:-0.613px;transform:translateX(-50%);">16:40</div>
<div class="t" style="left:805.29px;top:1051.75px;font-size:18.7px;color:#24292e;font-weight:400;letter-spacing:-0.613px;transform:translateX(-50%);">16:45</div>
<div class="t" style="left:965.89px;top:1051.75px;font-size:18.7px;color:#24292e;font-weight:400;letter-spacing:-0.613px;transform:translateX(-50%);">16:50</div>
<div class="t" style="left:1125.89px;top:1051.75px;font-size:18.7px;color:#24292e;font-weight:400;letter-spacing:-0.613px;transform:translateX(-50%);">16:55</div>
<div class="t" style="left:1287.19px;top:1051.75px;font-size:18.7px;color:#24292e;font-weight:400;letter-spacing:-0.613px;transform:translateX(-50%);">17:00</div>
<div class="t" style="left:1446.69px;top:1051.75px;font-size:18.7px;color:#24292e;font-weight:400;letter-spacing:-0.613px;transform:translateX(-50%);">17:05</div>
<div class="t" style="left:438.30px;top:1077.55px;font-size:18.7px;color:#1f62e0;font-weight:400;letter-spacing:-0.615px;-webkit-text-stroke:0.6px #1f62e0;">Name</div>
<div class="t" style="left:1192.20px;top:1077.55px;font-size:18.7px;color:#1f62e0;font-weight:400;transform:translateX(-100%);-webkit-text-stroke:0.6px #1f62e0;">Mean</div>
<div class="t" style="left:1324.00px;top:1077.55px;font-size:18.7px;color:#1f62e0;font-weight:400;transform:translateX(-100%);-webkit-text-stroke:0.6px #1f62e0;">Max</div>
<div class="t" style="left:1469.30px;top:1077.55px;font-size:18.7px;color:#1f62e0;font-weight:400;transform:translateX(-100%);-webkit-text-stroke:0.6px #1f62e0;">Last *</div>
<div style="position:absolute;left:395px;top:1093.7px;width:1123px;height:1.2px;background:#e4e4e4"></div>
<div style="position:absolute;left:407px;top:1108.9px;width:19.5px;height:5px;background:#56a64b;border-radius:3px"></div>
<div class="t" style="left:438.30px;top:1110.65px;font-size:18.7px;color:#24292e;font-weight:400;letter-spacing:0.156px;">auto -&gt; qwen3-coder</div>
<div class="t" style="left:1235.00px;top:1110.65px;font-size:18.7px;color:#24292e;font-weight:400;letter-spacing:0.098px;transform:translateX(-100%);">0.00560 ops/s</div>
<div class="t" style="left:1366.45px;top:1110.65px;font-size:18.7px;color:#24292e;font-weight:400;letter-spacing:0.049px;transform:translateX(-100%);">0.0246 ops/s</div>
<div class="t" style="left:1505.43px;top:1110.65px;font-size:18.7px;color:#24292e;font-weight:400;letter-spacing:-0.171px;transform:translateX(-100%);">0.00351 ops/s</div>
<div style="position:absolute;left:395px;top:1127.7px;width:1123px;height:1.2px;background:#e4e4e4"></div>
<div class="t" style="left:1634.60px;top:790.55px;font-size:18.7px;color:#24292e;font-weight:400;transform:translateX(-100%);">20 s</div>
<div class="t" style="left:1634.60px;top:850.25px;font-size:18.7px;color:#24292e;font-weight:400;transform:translateX(-100%);">15 s</div>
<div class="t" style="left:1634.60px;top:910.05px;font-size:18.7px;color:#24292e;font-weight:400;transform:translateX(-100%);">10 s</div>
<div class="t" style="left:1634.60px;top:970.55px;font-size:18.7px;color:#24292e;font-weight:400;transform:translateX(-100%);">5 s</div>
<div class="t" style="left:1634.60px;top:1029.25px;font-size:18.7px;color:#24292e;font-weight:400;transform:translateX(-100%);">0 s</div>
<div class="t" style="left:1749.09px;top:1051.75px;font-size:18.7px;color:#24292e;font-weight:400;letter-spacing:-0.613px;transform:translateX(-50%);">16:40</div>
<div class="t" style="left:1919.79px;top:1051.75px;font-size:18.7px;color:#24292e;font-weight:400;letter-spacing:-0.613px;transform:translateX(-50%);">16:45</div>
<div class="t" style="left:2090.59px;top:1051.75px;font-size:18.7px;color:#24292e;font-weight:400;letter-spacing:-0.613px;transform:translateX(-50%);">16:50</div>
<div class="t" style="left:2260.99px;top:1051.75px;font-size:18.7px;color:#24292e;font-weight:400;letter-spacing:-0.613px;transform:translateX(-50%);">16:55</div>
<div class="t" style="left:2431.69px;top:1051.75px;font-size:18.7px;color:#24292e;font-weight:400;letter-spacing:-0.613px;transform:translateX(-50%);">17:00</div>
<div class="t" style="left:2602.59px;top:1051.75px;font-size:18.7px;color:#24292e;font-weight:400;letter-spacing:-0.613px;transform:translateX(-50%);">17:05</div>
<div class="t" style="left:1597.40px;top:1077.55px;font-size:18.7px;color:#1f62e0;font-weight:400;letter-spacing:-0.615px;-webkit-text-stroke:0.6px #1f62e0;">Name</div>
<div class="t" style="left:2473.00px;top:1077.55px;font-size:18.7px;color:#1f62e0;font-weight:400;transform:translateX(-100%);-webkit-text-stroke:0.6px #1f62e0;">Mean</div>
<div class="t" style="left:2562.20px;top:1077.55px;font-size:18.7px;color:#1f62e0;font-weight:400;transform:translateX(-100%);-webkit-text-stroke:0.6px #1f62e0;">Max</div>
<div class="t" style="left:2665.40px;top:1077.55px;font-size:18.7px;color:#1f62e0;font-weight:400;transform:translateX(-100%);-webkit-text-stroke:0.6px #1f62e0;">Last *</div>
<div style="position:absolute;left:1555px;top:1093.6px;width:1122px;height:1.2px;background:#e4e4e4"></div>
<div style="position:absolute;left:1566px;top:1108.9px;width:19.5px;height:5px;background:#56a64b;border-radius:3px"></div>
<div class="t" style="left:1597.00px;top:1110.65px;font-size:18.7px;color:#24292e;font-weight:400;letter-spacing:0.185px;">p95 qwen3-coder</div>
<div class="t" style="left:2473.00px;top:1110.65px;font-size:18.7px;color:#24292e;font-weight:400;transform:translateX(-100%);">10 s</div>
<div class="t" style="left:2562.20px;top:1110.65px;font-size:18.7px;color:#24292e;font-weight:400;transform:translateX(-100%);">10 s</div>
<div class="t" style="left:2665.40px;top:1110.65px;font-size:18.7px;color:#24292e;font-weight:400;transform:translateX(-100%);">10 s</div>
<div style="position:absolute;left:1555px;top:1127.8px;width:1122px;height:1.2px;background:#e4e4e4"></div>
<div class="t" style="left:473.10px;top:1242.75px;font-size:18.7px;color:#24292e;font-weight:400;transform:translateX(-100%);">10 s</div>
<div class="t" style="left:473.10px;top:1294.95px;font-size:18.7px;color:#24292e;font-weight:400;transform:translateX(-100%);">8 s</div>
<div class="t" style="left:473.10px;top:1347.25px;font-size:18.7px;color:#24292e;font-weight:400;transform:translateX(-100%);">6 s</div>
<div class="t" style="left:1659.80px;top:1230.45px;font-size:18.7px;color:#24292e;font-weight:400;transform:translateX(-100%);">2.5 s</div>
<div class="t" style="left:1659.80px;top:1276.25px;font-size:18.7px;color:#24292e;font-weight:400;transform:translateX(-100%);">2 s</div>
<div class="t" style="left:1659.80px;top:1322.65px;font-size:18.7px;color:#24292e;font-weight:400;transform:translateX(-100%);">1.5 s</div>
<svg style="position:absolute;left:0;top:0" width="2704" height="1352" viewBox="0 0 2704 1352"><path d="M1664.3 380.5 H2666" stroke="#ededed" stroke-width="1"/><path d="M1664.3 435.4 H2666" stroke="#ededed" stroke-width="1"/><path d="M1664.3 490.7 H2666" stroke="#ededed" stroke-width="1"/><path d="M1664.3 545 H2666" stroke="#ededed" stroke-width="1"/><path d="M1664.3 600.4 H2666" stroke="#ededed" stroke-width="1"/><path d="M1769.5 362 V600.4" stroke="#ededed" stroke-width="1"/><path d="M1936.2 362 V600.4" stroke="#ededed" stroke-width="1"/><path d="M2101.8 362 V600.4" stroke="#ededed" stroke-width="1"/><path d="M2270 362 V600.4" stroke="#ededed" stroke-width="1"/><path d="M2437.5 362 V600.4" stroke="#ededed" stroke-width="1"/><path d="M2603.2 362 V600.4" stroke="#ededed" stroke-width="1"/><path d="M1664.7 600.4 L1915.5 600.4 Q1919.0 600.4 1919.3 596.9 L1927.3 514.0 Q1927.6 510.5 1929.8 507.8 L1933.8 503.0 Q1936.0 500.3 1937.2 497.0 L1942.8 481.3 Q1944.0 478.0 1947.5 478.0 L2007.8 478.0 Q2011.3 478.0 2011.6 474.5 L2018.7 388.3 Q2019.0 384.8 2022.5 384.8 L2074.5 384.8 Q2078.0 384.8 2078.3 388.3 L2085.1 469.5 Q2085.4 473.0 2087.3 476.0 L2091.1 482.0 Q2093.0 485.0 2094.2 488.3 L2099.8 502.7 Q2101.0 506.0 2104.5 506.0 L2166.5 506.0 Q2170.0 506.0 2170.3 509.5 L2177.6 596.9 Q2177.9 600.4 2181.4 600.4 L2224.5 600.4 Q2228.0 600.4 2228.3 596.9 L2235.7 510.7 Q2236.0 507.2 2239.5 507.2 L2383.5 507.2 Q2387.0 507.2 2387.3 510.7 L2394.2 596.9 Q2394.5 600.4 2398.0 600.4 L2662.0 600.4 L2662.0 600.4 L1664.7 600.4 Z" fill="#56a64b" fill-opacity="0.11" stroke="none"/><path d="M1664.7 600.4 L1915.5 600.4 Q1919.0 600.4 1919.3 596.9 L1927.3 514.0 Q1927.6 510.5 1929.8 507.8 L1933.8 503.0 Q1936.0 500.3 1937.2 497.0 L1942.8 481.3 Q1944.0 478.0 1947.5 478.0 L2007.8 478.0 Q2011.3 478.0 2011.6 474.5 L2018.7 388.3 Q2019.0 384.8 2022.5 384.8 L2074.5 384.8 Q2078.0 384.8 2078.3 388.3 L2085.1 469.5 Q2085.4 473.0 2087.3 476.0 L2091.1 482.0 Q2093.0 485.0 2094.2 488.3 L2099.8 502.7 Q2101.0 506.0 2104.5 506.0 L2166.5 506.0 Q2170.0 506.0 2170.3 509.5 L2177.6 596.9 Q2177.9 600.4 2181.4 600.4 L2224.5 600.4 Q2228.0 600.4 2228.3 596.9 L2235.7 510.7 Q2236.0 507.2 2239.5 507.2 L2383.5 507.2 Q2387.0 507.2 2387.3 510.7 L2394.2 596.9 Q2394.5 600.4 2398.0 600.4 L2662.0 600.4" fill="none" stroke="#56a64b" stroke-width="1.7" stroke-linejoin="round"/><path d="M544.2 817.6 H1506.1" stroke="#ededed" stroke-width="1"/><path d="M544.2 860.7 H1506.1" stroke="#ededed" stroke-width="1"/><path d="M544.2 903.4 H1506.1" stroke="#ededed" stroke-width="1"/><path d="M544.2 945.7 H1506.1" stroke="#ededed" stroke-width="1"/><path d="M544.2 989.5 H1506.1" stroke="#ededed" stroke-width="1"/><path d="M544.2 1031.2 H1506.1" stroke="#ededed" stroke-width="1"/><path d="M645 792.7 V1031.2" stroke="#ededed" stroke-width="1"/><path d="M805.6 792.7 V1031.2" stroke="#ededed" stroke-width="1"/><path d="M966.2 792.7 V1031.2" stroke="#ededed" stroke-width="1"/><path d="M1126.2 792.7 V1031.2" stroke="#ededed" stroke-width="1"/><path d="M1287.5 792.7 V1031.2" stroke="#ededed" stroke-width="1"/><path d="M1447 792.7 V1031.2" stroke="#ededed" stroke-width="1"/><path d="M544.2 1031.2 L778.2 1031.2 Q781.7 1031.2 782.5 1027.8 L787.7 1003.8 Q788.5 1000.4 789.5 997.1 L796.0 976.3 Q797.0 973.0 797.6 969.5 L800.4 952.5 Q801.0 949.0 801.5 945.5 L806.8 908.2 Q807.3 904.7 808.2 901.3 L812.6 884.9 Q813.5 881.5 817.0 881.5 L858.5 881.5 Q862.0 881.5 862.8 878.1 L868.0 854.4 Q868.8 851.0 872.3 851.0 L874.5 851.0 Q878.0 851.0 878.8 847.6 L884.4 824.8 Q885.2 821.4 888.7 821.4 L930.9 821.4 Q934.4 821.4 935.3 824.8 L956.7 908.2 Q957.6 911.6 958.5 915.0 L964.6 937.9 Q965.5 941.3 969.0 941.3 L1010.7 941.3 Q1014.2 941.3 1015.0 944.7 L1020.9 968.0 Q1021.7 971.4 1025.2 971.4 L1027.1 971.4 Q1030.6 971.4 1031.4 974.8 L1037.2 998.0 Q1038.0 1001.4 1041.5 1001.4 L1050.0 1001.4 Q1053.5 1001.4 1054.5 998.0 L1061.0 974.8 Q1062.0 971.4 1065.5 971.4 L1083.1 971.4 Q1086.6 971.4 1087.5 968.0 L1093.6 944.7 Q1094.5 941.3 1098.0 941.3 L1098.8 941.3 Q1102.3 941.3 1103.2 944.7 L1109.6 968.0 Q1110.5 971.4 1114.0 971.4 L1202.7 971.4 Q1206.2 971.4 1207.1 974.8 L1213.1 998.0 Q1214.0 1001.4 1217.5 1001.4 L1236.1 1001.4 Q1239.6 1001.4 1240.3 1004.8 L1245.1 1027.8 Q1245.8 1031.2 1249.3 1031.2 L1475.3 1031.2 Q1478.8 1031.2 1479.7 1027.8 L1485.8 1004.8 Q1486.7 1001.4 1490.2 1001.4 L1502.7 1001.4 L1502.7 1031.2 L544.2 1031.2 Z" fill="#56a64b" fill-opacity="0.11" stroke="none"/><path d="M544.2 1031.2 L778.2 1031.2 Q781.7 1031.2 782.5 1027.8 L787.7 1003.8 Q788.5 1000.4 789.5 997.1 L796.0 976.3 Q797.0 973.0 797.6 969.5 L800.4 952.5 Q801.0 949.0 801.5 945.5 L806.8 908.2 Q807.3 904.7 808.2 901.3 L812.6 884.9 Q813.5 881.5 817.0 881.5 L858.5 881.5 Q862.0 881.5 862.8 878.1 L868.0 854.4 Q868.8 851.0 872.3 851.0 L874.5 851.0 Q878.0 851.0 878.8 847.6 L884.4 824.8 Q885.2 821.4 888.7 821.4 L930.9 821.4 Q934.4 821.4 935.3 824.8 L956.7 908.2 Q957.6 911.6 958.5 915.0 L964.6 937.9 Q965.5 941.3 969.0 941.3 L1010.7 941.3 Q1014.2 941.3 1015.0 944.7 L1020.9 968.0 Q1021.7 971.4 1025.2 971.4 L1027.1 971.4 Q1030.6 971.4 1031.4 974.8 L1037.2 998.0 Q1038.0 1001.4 1041.5 1001.4 L1050.0 1001.4 Q1053.5 1001.4 1054.5 998.0 L1061.0 974.8 Q1062.0 971.4 1065.5 971.4 L1083.1 971.4 Q1086.6 971.4 1087.5 968.0 L1093.6 944.7 Q1094.5 941.3 1098.0 941.3 L1098.8 941.3 Q1102.3 941.3 1103.2 944.7 L1109.6 968.0 Q1110.5 971.4 1114.0 971.4 L1202.7 971.4 Q1206.2 971.4 1207.1 974.8 L1213.1 998.0 Q1214.0 1001.4 1217.5 1001.4 L1236.1 1001.4 Q1239.6 1001.4 1240.3 1004.8 L1245.1 1027.8 Q1245.8 1031.2 1249.3 1031.2 L1475.3 1031.2 Q1478.8 1031.2 1479.7 1027.8 L1485.8 1004.8 Q1486.7 1001.4 1490.2 1001.4 L1502.7 1001.4" fill="none" stroke="#56a64b" stroke-width="1.7" stroke-linejoin="round"/><path d="M1642.5 792.3 H2666" stroke="#ededed" stroke-width="1"/><path d="M1642.5 852 H2666" stroke="#ededed" stroke-width="1"/><path d="M1642.5 911.8 H2666" stroke="#ededed" stroke-width="1"/><path d="M1642.5 972.3 H2666" stroke="#ededed" stroke-width="1"/><path d="M1642.5 1031 H2666" stroke="#ededed" stroke-width="1"/><path d="M1749.4 792.3 V1031" stroke="#ededed" stroke-width="1"/><path d="M1920.1 792.3 V1031" stroke="#ededed" stroke-width="1"/><path d="M2090.9 792.3 V1031" stroke="#ededed" stroke-width="1"/><path d="M2261.3 792.3 V1031" stroke="#ededed" stroke-width="1"/><path d="M2432 792.3 V1031" stroke="#ededed" stroke-width="1"/><path d="M2602.9 792.3 V1031" stroke="#ededed" stroke-width="1"/><rect x="1911.6" y="911.8" width="247.20000000000027" height="119.20000000000005" fill="#56a64b" fill-opacity="0.11"/><path d="M1911.6 911.8 H2158.8" stroke="#56a64b" stroke-width="1.7"/><rect x="2227" y="911.8" width="153.80000000000018" height="119.20000000000005" fill="#56a64b" fill-opacity="0.11"/><path d="M2227 911.8 H2380.8" stroke="#56a64b" stroke-width="1.7"/><path d="M480.4 1244.5 H1506.8" stroke="#ededed" stroke-width="1"/><path d="M480.4 1296.7 H1506.8" stroke="#ededed" stroke-width="1"/><path d="M480.4 1349 H1506.8" stroke="#ededed" stroke-width="1"/><path d="M588.5 1223 V1352" stroke="#ededed" stroke-width="1"/><path d="M759.7 1223 V1352" stroke="#ededed" stroke-width="1"/><path d="M929.6 1223 V1352" stroke="#ededed" stroke-width="1"/><path d="M1101.2 1223 V1352" stroke="#ededed" stroke-width="1"/><path d="M1272.5 1223 V1352" stroke="#ededed" stroke-width="1"/><path d="M1442.8 1223 V1352" stroke="#ededed" stroke-width="1"/><path d="M737.0 1505.0 L749.9 1249.5 Q750.2 1244.5 755.2 1244.5 L993.2 1244.5 Q998.2 1244.5 998.5 1249.5 L1012.3 1505.0 L1012.3 1505 L737.0 1505 Z" fill="#56a64b" fill-opacity="0.11" stroke="none"/><path d="M737.0 1505.0 L749.9 1249.5 Q750.2 1244.5 755.2 1244.5 L993.2 1244.5 Q998.2 1244.5 998.5 1249.5 L1012.3 1505.0" fill="none" stroke="#56a64b" stroke-width="1.7" stroke-linejoin="round"/><path d="M1052.7 1505.0 L1065.5 1249.5 Q1065.8 1244.5 1070.8 1244.5 L1220.7 1244.5 L1220.7 1505 Z" fill="#56a64b" fill-opacity="0.11"/><path d="M1052.7 1505.0 L1065.5 1249.5 Q1065.8 1244.5 1070.8 1244.5 L1220.7 1244.5" fill="none" stroke="#56a64b" stroke-width="1.7"/><path d="M1668.9 1232.2 H2666.3" stroke="#ededed" stroke-width="1"/><path d="M1668.9 1278 H2666.3" stroke="#ededed" stroke-width="1"/><path d="M1668.9 1324.4 H2666.3" stroke="#ededed" stroke-width="1"/><path d="M1773.4 1223 V1352" stroke="#ededed" stroke-width="1"/><path d="M1939.1 1223 V1352" stroke="#ededed" stroke-width="1"/><path d="M2105.4 1223 V1352" stroke="#ededed" stroke-width="1"/><path d="M2272.5 1223 V1352" stroke="#ededed" stroke-width="1"/><path d="M2438.8 1223 V1352" stroke="#ededed" stroke-width="1"/><path d="M2604.5 1223 V1352" stroke="#ededed" stroke-width="1"/><path d="M1927.2 1462.7 L1938.0 1248.8 Q1938.2 1245.8 1940.6 1247.6 L1944.0 1250.4 Q1946.4 1252.2 1949.4 1252.2 L2011.5 1252.2 Q2014.5 1252.2 2016.5 1254.5 L2018.9 1257.2 Q2020.9 1259.5 2023.9 1259.5 L2078.3 1259.5 Q2081.3 1259.5 2083.4 1257.4 L2086.0 1254.7 Q2088.1 1252.6 2088.3 1255.6 L2104.4 1462.7 L2104.4 1462.7 L1927.2 1462.7 Z" fill="#56a64b" fill-opacity="0.11" stroke="none"/><path d="M1927.2 1462.7 L1938.0 1248.8 Q1938.2 1245.8 1940.6 1247.6 L1944.0 1250.4 Q1946.4 1252.2 1949.4 1252.2 L2011.5 1252.2 Q2014.5 1252.2 2016.5 1254.5 L2018.9 1257.2 Q2020.9 1259.5 2023.9 1259.5 L2078.3 1259.5 Q2081.3 1259.5 2083.4 1257.4 L2086.0 1254.7 Q2088.1 1252.6 2088.3 1255.6 L2104.4 1462.7" fill="none" stroke="#56a64b" stroke-width="1.7" stroke-linejoin="round"/></svg>
<svg style="position:absolute;left:0;top:0;overflow:visible" width="1" height="1"><text transform="translate(1568.3,480.2) rotate(-90)" text-anchor="middle" font-family="Liberation Sans" font-size="18.7" fill="#24292e" textLength="92.9" lengthAdjust="spacing">Tokens/sec</text></svg>
<svg style="position:absolute;left:0;top:0;overflow:visible" width="1" height="1"><text transform="translate(409.5,911.6) rotate(-90)" text-anchor="middle" font-family="Liberation Sans" font-size="18.7" fill="#24292e" textLength="90.2" lengthAdjust="spacing">Routes/sec</text></svg>
<svg style="position:absolute;left:0;top:0;overflow:visible" width="1" height="1"><text transform="translate(1568.3,911.3) rotate(-90)" text-anchor="middle" font-family="Liberation Sans" font-size="18.7" fill="#24292e" textLength="70" lengthAdjust="spacing">Seconds</text></svg>
<svg style="position:absolute;left:0;top:0;overflow:visible" width="1" height="1"><text transform="translate(409.5,1343) rotate(-90)" text-anchor="middle" font-family="Liberation Sans" font-size="18.7" fill="#24292e" textLength="70" lengthAdjust="spacing">Seconds</text></svg>
<svg style="position:absolute;left:0;top:0;overflow:visible" width="1" height="1"><text transform="translate(1568.3,1342) rotate(-90)" text-anchor="middle" font-family="Liberation Sans" font-size="18.7" fill="#24292e" textLength="154" lengthAdjust="spacing">Seconds per token</text></svg>
<svg style="position:absolute;left:2544px;top:236px;overflow:visible;" width="26" height="30" viewBox="0 0 26 30"><path d="M7.5 13 V4 C7.5 2.3 10.5 2.3 10.5 4 V11.5 C10.5 10 13.5 10 13.5 11.5 V12.5 C13.5 11 16.5 11 16.5 12.5 V13.5 C16.5 12 19.5 12 19.5 13.5 V20 C19.5 24 17.5 27.5 13 27.5 C9.5 27.5 8 26 6 23 L2.5 17.5 C1.5 16 3.5 14.5 5 15.5 L7.5 18 Z" fill="#ffffff" stroke="#111111" stroke-width="1.5" stroke-linejoin="round"/><path d="M10.5 12 V18 M13.5 12.5 V18 M16.5 13.5 V18" stroke="#111" stroke-width="1"/></svg>
<script>(function(){var w=window.innerWidth;if(w&&Math.abs(w-2704)>2){document.documentElement.style.zoom=(w/2704);}})();</script>
</body></html>
